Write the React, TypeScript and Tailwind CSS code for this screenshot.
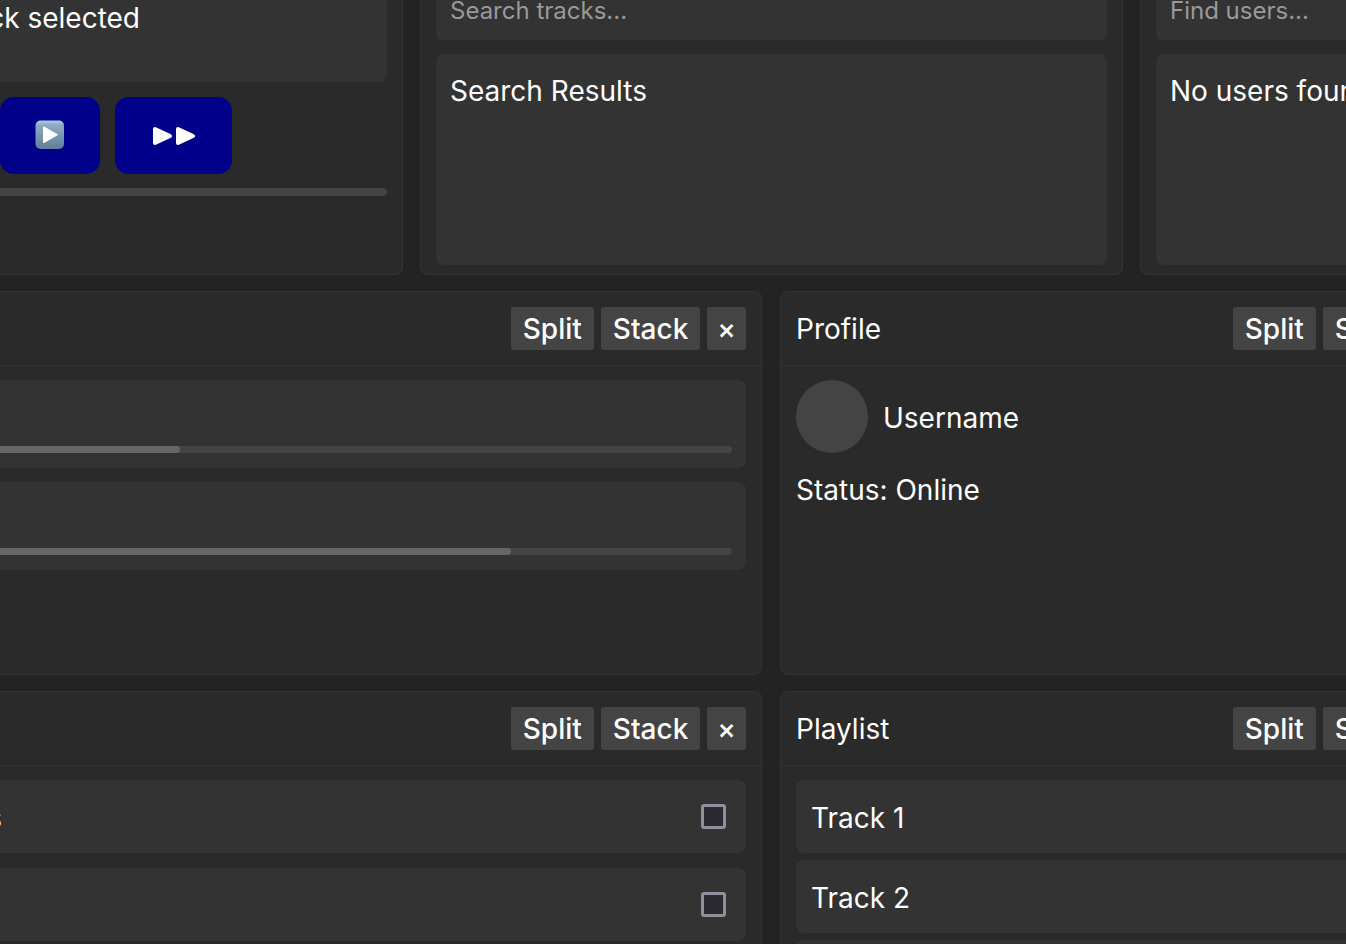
import type { ReactNode } from "react";

const text = "text-[28px] leading-[43px]";

function Panel({ className = "", children }: { className?: string; children: ReactNode }) {
  return (
    <section className={`flex flex-col bg-[#2a2a2a] border border-[#333] ${className}`}>
      {children}
    </section>
  );
}

function HeaderButton({ label, className = "px-3", children }: { label: string; className?: string; children: ReactNode }) {
  return (
    <button
      aria-label={label}
      className={`h-[43px] pt-0.5 rounded-[3px] bg-[#444] text-[28px] leading-[41px] font-medium ${className}`}
    >
      {children}
    </button>
  );
}

function PanelHeader({ title }: { title?: string }) {
  return (
    <header className="flex items-center justify-between h-[74px] px-[15px] border-b border-[#333]">
      <h2 className={`pt-0.5 ${text}`}>{title}</h2>
      <div className="flex gap-[7px]">
        <HeaderButton label="Split">Split</HeaderButton>
        <HeaderButton label="Stack">Stack</HeaderButton>
        <HeaderButton label="Close" className="px-[10px]">×</HeaderButton>
      </div>
    </header>
  );
}

function Player() {
  return (
    <Panel className="border-l-0 border-t-0 rounded-br-lg pr-[15px]">
      <div className="h-[82px] bg-[#333] rounded-br-lg">
        {/* only the tail of the label stays inside the view */}
        <p className="flex justify-end w-[140px] overflow-hidden whitespace-nowrap text-[28px] leading-9">
          No track selected
        </p>
      </div>
      <div className="flex gap-[15px] mt-[15px]">
        <button aria-label="Play" className="flex items-center justify-center w-[100px] h-[77px] rounded-[14px] bg-[#00008b]">
          <svg width="30" height="32" viewBox="0 0 30 32">
            <defs>
              <linearGradient id="play" x1="0" y1="0" x2="0" y2="1">
                <stop offset="0" stopColor="#b4cde0" />
                <stop offset="0.15" stopColor="#8fabc2" />
                <stop offset="1" stopColor="#5f7f9a" />
              </linearGradient>
            </defs>
            <rect x="0.5" y="0.5" width="28.500" height="28.500" rx="5" fill="url(#play)" />
            <path d="M8 7.5Q8 6 9.500 6.800L22.200 14Q23.300 14.700 22.200 15.400L9.500 22.800Q8 23.500 8 22Z" fill="#fff" />
          </svg>
        </button>
        <button aria-label="Next" className="flex items-center justify-center w-[117px] h-[77px] rounded-[14px] bg-[#00008b]">
          <svg width="42" height="20" viewBox="0 0 42 20" fill="#fff" stroke="#fff" strokeWidth="4" strokeLinejoin="round">
            <path d="M2 3V17L17 10Z" />
            <path d="M25 3V17L40 10Z" />
          </svg>
        </button>
      </div>
      <div className="h-2 mt-[14px] rounded-r bg-[#444]" />
    </Panel>
  );
}

function SearchPanel({ placeholder, result, className = "" }: { placeholder: string; result: string; className?: string }) {
  return (
    <Panel className={`border-t-0 rounded-b-lg px-[15px] pb-[9px] ${className}`}>
      <input
        type="text"
        aria-label={placeholder}
        placeholder={placeholder}
        className="w-full h-10 px-[14px] pb-5 rounded-b-md bg-[#333] text-[24px] placeholder:text-[#999] outline-none"
      />
      <div className={`flex-1 mt-[14px] px-[14px] py-4 rounded-lg bg-[#333] whitespace-nowrap ${text}`}>
        {result}
      </div>
    </Panel>
  );
}

function Progress({ value }: { value: number }) {
  return (
    <div className="flex items-end h-[88px] pr-[14px] pb-[15px] rounded-r-lg bg-[#333]">
      <div className="w-full h-[7px] rounded-r bg-[#444]">
        <div className="h-full rounded-r bg-[#666]" style={{ width: `${value}%` }} />
      </div>
    </div>
  );
}

function Option({ label }: { label: string }) {
  return (
    <label className="flex items-center justify-between h-[73px] pr-5 rounded-r-lg bg-[#333]">
      <span className={`flex justify-end w-[2px] pt-[3px] overflow-hidden ${text}`}>{label}</span>
      <input
        type="checkbox"
        aria-label={label || "Option"}
        className="appearance-none size-[25px] rounded-[3px] border-3 border-[#8f8f9d] bg-[#2b2a33]"
      />
    </label>
  );
}

export default function App() {
  return (
    <main className="flex flex-col gap-4 h-screen overflow-hidden bg-[#232323] text-white font-['Inter',sans-serif]">
      <div className="grid grid-cols-[minmax(0,403fr)_minmax(0,703fr)_minmax(0,206fr)] gap-[17px] h-[275px] shrink-0">
        <Player />
        <SearchPanel placeholder="Search tracks..." result="Search Results" />
        <SearchPanel placeholder="Find users..." result="No users found" className="min-w-[704px]" />
      </div>

      <div className="grid grid-cols-[minmax(0,762fr)_minmax(0,566fr)] gap-[18px] h-96 shrink-0">
        <Panel className="border-l-0 rounded-r-lg">
          <PanelHeader />
          <div className="flex flex-col gap-[14px] py-[14px] pr-[15px]">
            <Progress value={24.6} />
            <Progress value={69.8} />
          </div>
        </Panel>
        <Panel className="rounded-lg min-w-[704px]">
          <PanelHeader title="Profile" />
          <div className="px-[15px] py-[14px]">
            <div className="flex items-center gap-[15px] mb-4">
              <div className="w-[72px] h-[73px] rounded-full bg-[#444]" />
              <span className={`pt-[3px] ${text}`}>Username</span>
            </div>
            <p className={text}>Status: Online</p>
          </div>
        </Panel>
      </div>

      <div className="grid grid-cols-[minmax(0,762fr)_minmax(0,566fr)] gap-[18px] shrink-0">
        <Panel className="border-l-0 rounded-r-lg">
          <PanelHeader />
          <div className="flex flex-col gap-[15px] py-[14px] pr-[15px]">
            <Option label="Notifications" />
            <Option label="" />
          </div>
        </Panel>
        <Panel className="rounded-lg min-w-[704px]">
          <PanelHeader title="Playlist" />
          <ul className="flex flex-col gap-[7px] px-[15px] py-[14px]">
            {["Track 1", "Track 2", "Track 3"].map((track) => (
              <li key={track} className={`px-[15px] pt-[17px] pb-[13px] rounded-lg bg-[#333] ${text}`}>
                {track}
              </li>
            ))}
          </ul>
        </Panel>
      </div>
    </main>
  );
}
